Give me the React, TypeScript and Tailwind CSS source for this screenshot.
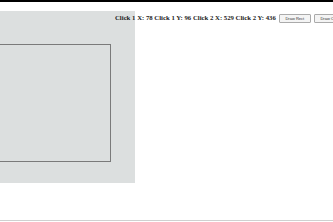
import React from "react";

export default function App() {
  return (
    <div className="w-[333px] h-[222px] bg-white overflow-hidden relative">
      <div className="h-[2px] bg-black" />
      <div className="flex items-start pt-[9px] whitespace-nowrap">
        <div className="shrink-0 w-[135px] h-[172px] bg-[#dcdfdf] mr-[-20px] pt-[33px]">
          <div className="w-[111px] h-[118px] border border-[#7a7a7a] border-l-0" />
        </div>
        <div className="relative flex items-center gap-[3px] pt-[3px]">
          <span
            className="text-[6.75px] font-bold text-[#222] leading-none"
            style={{ fontFamily: '"Liberation Serif", serif' }}
          >
            Click 1 X: 78 Click 1 Y: 96 Click 2 X: 529 Click 2 Y: 436
          </span>
          <button
            className="h-[9px] w-[32px] border border-[#aaa] bg-[#f4f4f4] rounded-[1px] text-[4px] text-[#333] leading-none flex items-center justify-center"
            style={{ fontFamily: '"Liberation Sans", sans-serif' }}
          >
            Draw Rect
          </button>
          <button
            className="h-[9px] w-[34px] border border-[#aaa] bg-[#f4f4f4] rounded-[1px] text-[4px] text-[#333] leading-none flex items-center justify-center"
            style={{ fontFamily: '"Liberation Sans", sans-serif' }}
          >
            Draw Circle
          </button>
        </div>
      </div>
      <div className="mt-[37px] h-[1px] bg-[#d0d0d0]" />
    </div>
  );
}
